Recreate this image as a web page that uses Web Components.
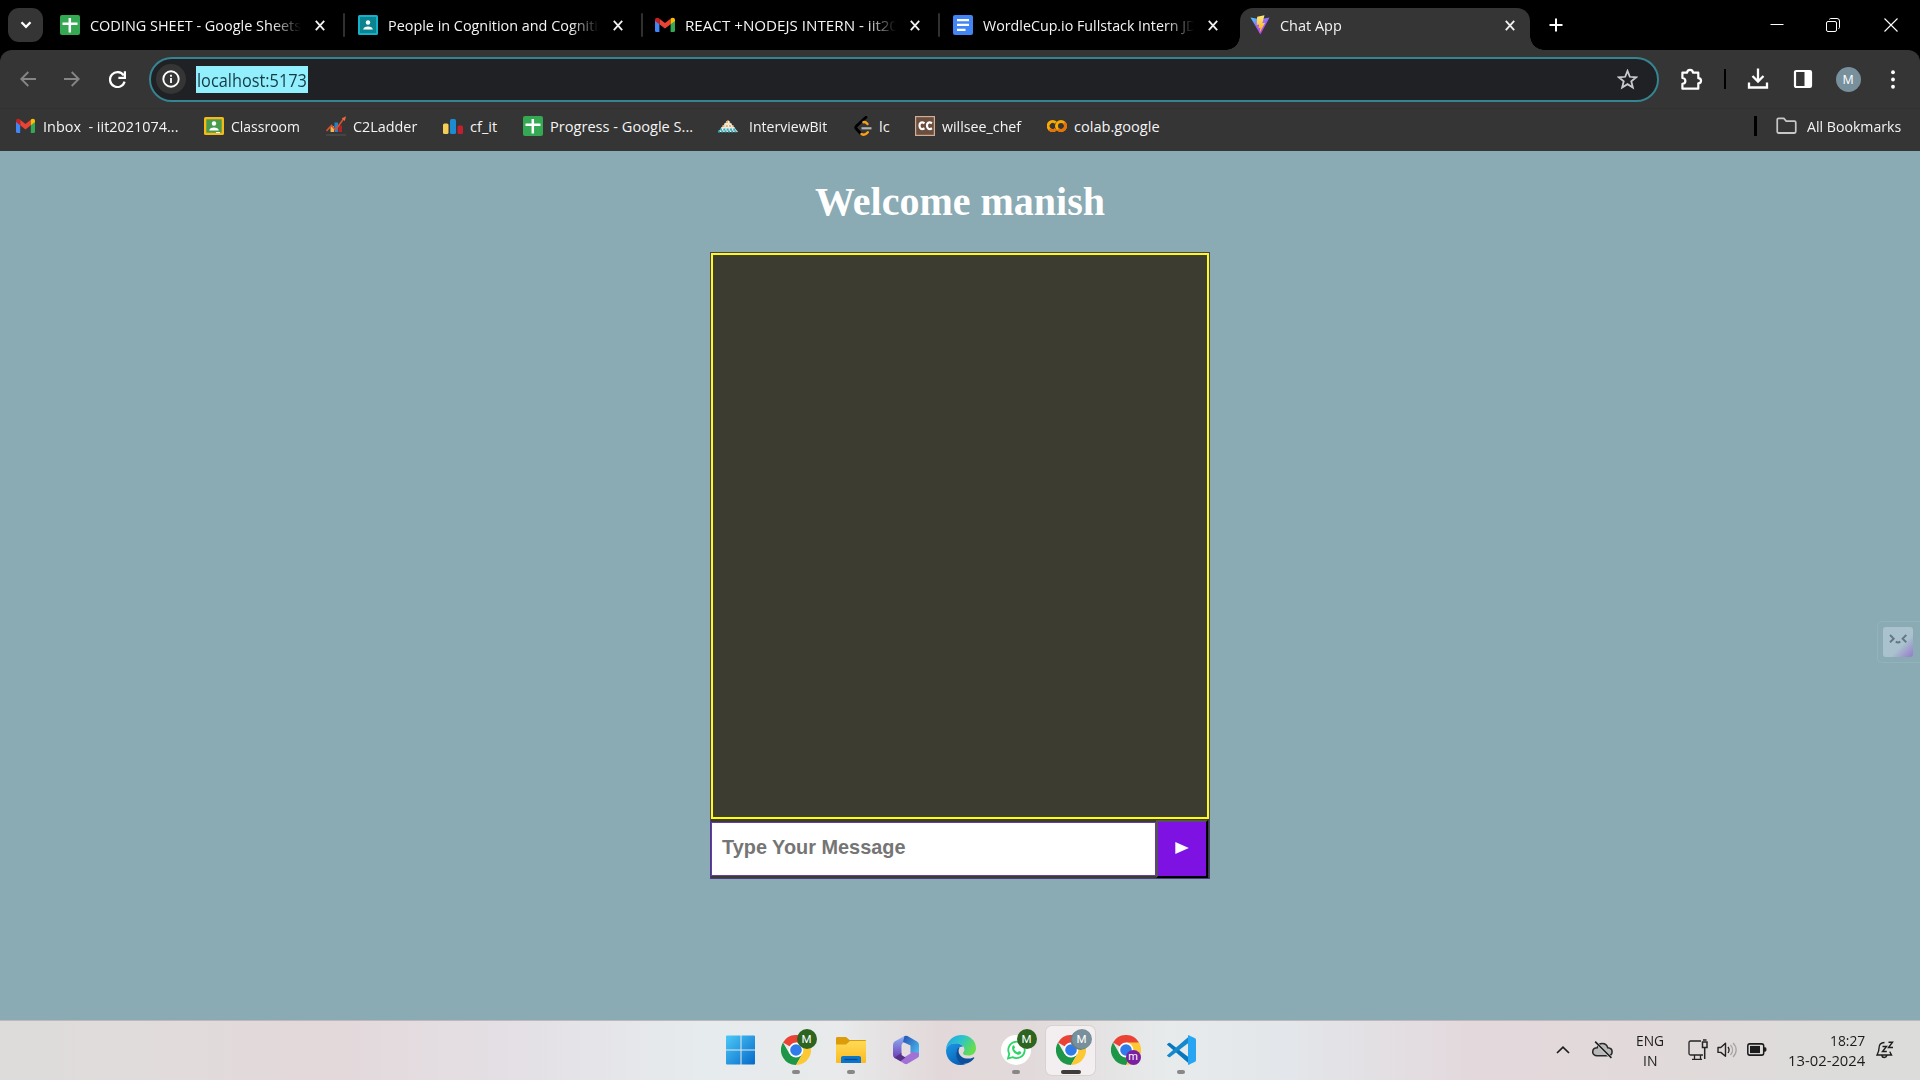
<!DOCTYPE html>
<html lang="en">
<head>
<meta charset="utf-8">
<title>Chat App</title>
<style>
html,body{margin:0;height:100%;overflow:hidden;background:#000}
body{font-family:"Open Sans","Noto Sans",sans-serif}
</style>
</head>
<body>
<desktop-screen></desktop-screen>
<script>
const chrome = `<path d="M15 15 2 7.500A15 15 0 0 1 28 7.500z" fill="#ea4335"/><path d="M2 7.500A15 15 0 0 0 15 30L21.500 18.700 8.500 18.700z" fill="#1e9648"/><path d="M28 7.500A15 15 0 0 1 15 30L21.500 18.700 15 7.500z" fill="#fcc934"/><circle cx="15" cy="15" r="7.400" fill="#fff"/><circle cx="15" cy="15" r="5.800" fill="#2f7bea"/>`;
const sheet = `<rect width="20" height="20" rx="2" fill="#34a853"/><path d="M9.800 3v14.500M2.500 8.800h15" stroke="#fff" stroke-width="2.500"/>`;
const gmail = `<path d="M0 5v10.500A1.500 1.500 0 0 0 1.500 17H4.400V8.500z" fill="#4285f4"/><path d="M20 5v10.500a1.500 1.500 0 0 1-1.500 1.500H15.600V8.500z" fill="#34a853"/><path d="M4.400 3.700 10 8l5.600-4.300v5.600L10 13.600 4.400 9.300z" fill="#ea4335"/><path d="M0 5c0-2.200 2.300-3 4-1.700l.4.400v5.600L0 6z" fill="#c5221f"/><path d="M20 5c0-2.200-2.300-3-4-1.700l-.4.400v5.600L20 6z" fill="#fbbc04"/>`;
const person = `<circle cx="10" cy="7.500" r="2.200" fill="#fff"/><path d="M5.200 14.500c0-4 9.600-4 9.600 0z" fill="#fff"/>`;
// name: [viewBox, markup]
const ICONS = {
  sheet:['0 0 20 20',sheet], gmail:['0 0 20 20',gmail],
  people:['0 0 20 20',`<rect width="20" height="20" rx="1.500" fill="#16b1c8"/><rect x="2" y="2" width="16" height="16" fill="#0b8492"/>${person}`],
  classroom:['0 0 20 20',`<rect y="1" width="20" height="18" rx="1.500" fill="#f5ba15"/><rect x="2.300" y="3.300" width="15.400" height="13.400" fill="#4a9a50"/>${person}<path d="M12 16h4v1h-4z" fill="#fff"/>`],
  docs:['0 0 20 20',`<rect width="20" height="20" rx="2" fill="#4285f4"/><path d="M4 5.200h12M4 9.900h12M4 14.900h8.500" stroke="#fff" stroke-width="2.200"/>`],
  vite:['0 0 20 20',`<defs><linearGradient id="a" x1="0" y1="0" x2=".6" y2="1"><stop stop-color="#41d1ff"/><stop offset=".5" stop-color="#9a66f8"/><stop offset="1" stop-color="#bd34fe"/></linearGradient><linearGradient id="b" x1="0" y1="0" x2="0" y2="1"><stop stop-color="#ffea83"/><stop offset="1" stop-color="#ffa800"/></linearGradient></defs><path d="M.5 2.600 10 4.200 19.500 2.600 10.400 19.500z" fill="url(#a)"/><path d="M14.500.2 7.200 1.700 6.700 10l2.500-.5-.8 3.700 2-.5-1 5.500 5.700-10.500-2.800.5z" fill="url(#b)"/>`],
  x:['0 0 10 10',`<path d="M.8.8 9.200 9.200M9.200.8.8 9.200" stroke="#f1f1f1" stroke-width="1.900"/>`],
  down:['0 0 12 8',`<path d="M1.500 1.300 6 5.800 10.500 1.300" fill="none" stroke="#fff" stroke-width="2.300"/>`],
  plus:['0 0 14 14',`<path d="M7 .5v13M.5 7h13" stroke="#fff" stroke-width="2"/>`],
  min:['0 0 14 14',`<path d="M.5 6.500h13" stroke="#fff"/>`],
  restore:['0 0 14 14',`<rect x=".5" y="3.500" width="10" height="10" rx="1.500" fill="none" stroke="#fff"/><path d="M3.500 1.500c0-.6.5-1 1-1H11A2.500 2.500 0 0 1 13.500 3v6.500c0 .6-.4 1-1 1" fill="none" stroke="#fff"/>`],
  close:['0 0 14 14',`<path d="M.5.5l13 13M13.500.5l-13 13" stroke="#fff" stroke-width="1.100"/>`],
  back:['0 0 16 16',`<path d="M16 8H1.500M8.300 1 1.300 8l7 7" fill="none" stroke="#858585" stroke-width="1.900"/>`],
  fwd:['0 0 16 16',`<path d="M0 8h14.500M7.700 1l7 7-7 7" fill="none" stroke="#858585" stroke-width="1.900"/>`],
  reload:['0 0 16 16',`<path d="M13.800 4.200A7 7 0 1 0 14.700 10M15 .3V6.500H8.800" fill="none" stroke="#fff" stroke-width="2.100"/>`],
  info:['0 0 18 18',`<circle cx="9" cy="9" r="7.700" fill="none" stroke="#fff" stroke-width="1.900"/><path d="M9 8v5M9 4.800v2" stroke="#fff" stroke-width="1.800"/>`],
  star:['0 0 20 20',`<path d="m10 1.800 2.200 5.600 6 .5-4.600 3.800 1.500 5.900L10 14.400 4.900 17.600l1.500-5.900L1.800 7.900l6-.5z" fill="none" stroke="#c9cacc" stroke-width="1.700"/>`],
  ext:['0 0 22 22',`<path d="M2.300 4.500h4.500c.2-3.700 5.400-3.700 5.600 0h5.100v5.200c3.500.2 3.500 4.800 0 5v5.100H2.300v-4.600c3.800-.5 3.800-5.100 0-5.600z" fill="none" stroke="#fff" stroke-width="2.100" stroke-linejoin="round"/>`],
  download:['0 0 22 22',`<path d="M11 .5v12.500M5.500 8 11 13.500 16.500 8M2 14.500V19.500h18v-5" fill="none" stroke="#fff" stroke-width="2.300"/>`],
  panel:['0 0 20 20',`<rect x="2" y="2" width="16" height="16" rx="1.200" fill="none" stroke="#fff" stroke-width="2.200"/><path d="M11.500 2H18v16h-6.500z" fill="#fff"/>`],
  dots:['0 0 6 20',`<g fill="#fff"><circle cx="3" cy="3" r="1.900"/><circle cx="3" cy="10" r="1.900"/><circle cx="3" cy="17" r="1.900"/></g>`],
  ladder:['0 0 20 20',`<path d="M4.500 10h3.500v6H4.500z" fill="#efb94f"/><path d="M8.500 6.500H12V16H8.500z" fill="#1d86c8"/><path d="M12.500 9.500H16V16h-3.500z" fill="#b5202a"/><path d="M.5 15 5.500 9.500 9.500 14 18 2.200" fill="none" stroke="#d9512d" stroke-width="1.600"/><path d="M20 .2 18.800 5 15.700 2.500z" fill="#f46b3b"/><path d="M0 19h20" stroke="#555"/>`],
  cf:['0 0 20 20',`<rect x="0" y="7.500" width="5.500" height="10.500" rx="1.500" fill="#f5ce56"/><rect x="7" y="3" width="6" height="15" rx="1.500" fill="#1c8bd0"/><rect x="14.500" y="9.500" width="5.500" height="8.500" rx="1.500" fill="#c1202c"/>`],
  ib:['0 0 20 20',`<path d="M10 4 20 16H0z" fill="#f4f1e5"/><g stroke-width="2" stroke-dasharray="2 1.300" fill="none"><path d="M8 6h4M4.500 10h11" stroke="#f2ae60"/><path d="M6.500 8h7M3 12.300h14" stroke="#d9e8e5"/><path d="M0 15.500h20M2 13.500h16" stroke="#33a9bd"/></g>`],
  lc:['0 0 18 20',`<path d="M12 1.300 2.500 10c-1 1-1 2 0 3l3.700 4" fill="none" stroke="#000" stroke-width="2.800" stroke-linecap="round"/><path d="M9.500 6.200c1.500-.7 2.500 0 4 1.800M7.500 18c2.500 1.500 4.500.5 6.300-1.800" fill="none" stroke="#f7a11b" stroke-width="2.400" stroke-linecap="round"/><path d="M7.500 12.300h10" stroke="#b3b3b3" stroke-width="2.200"/>`],
  cc:['0 0 20 20',`<rect width="20" height="20" fill="#d0ad95"/><rect x="1.200" y="1.200" width="17.600" height="17.600" fill="#6b4e3d"/><path d="M9.500 7.300C6.300 5.300 4.400 7 4.500 9.800S6.500 14 9.500 12.300M17 7.300c-3.200-2-5.100-.3-5 2.500s2 4.200 5 2.500" fill="none" stroke="#fff" stroke-width="2.200"/>`],
  colab:['0 0 20 20',`<path d="M8.700 6.700A4.500 4.500 0 1 0 8.700 13.300" fill="none" stroke="#f9ab00" stroke-width="3"/><circle cx="14" cy="10" r="4.500" fill="none" stroke="#f9ab00" stroke-width="3"/><path d="M10.800 13.200A4.500 4.500 0 0 0 17.200 6.800M2.300 13.200A4.500 4.500 0 0 0 8.700 13.300" fill="none" stroke="#e8710a" stroke-width="3"/>`],
  folder:['0 0 22 18',`<path d="M1.300 2.800c0-1 .6-1.500 1.400-1.500h5.500l2.500 2.900h8.600c.9 0 1.400.6 1.400 1.400v9c0 .8-.6 1.400-1.400 1.400H2.700c-.8 0-1.400-.6-1.400-1.400z" fill="none" stroke="#c7c7c7" stroke-width="1.800"/>`],
  win:['0 0 30 30',`<defs><linearGradient id="w" x1="0" y1="0" x2="1" y2="1" ><stop stop-color="#4cc9f7"/><stop offset="1" stop-color="#0669c9"/></linearGradient></defs><path d="M1 .5h13.500V14.500H0V1.500a1 1 0 0 1 1-1zM15.500.5H28a1 1 0 0 1 1 1v13H15.500zM0 15.500h14.500v14H1a1 1 0 0 1-1-1zM15.500 15.500H29v13a1 1 0 0 1-1 1H15.500z" fill="url(#w)"/>`],
  chrome:['0 0 30 30',chrome],
  files:['0 0 30 30',`<defs><linearGradient id="f" x1="0" y1="0" x2="0" y2="1"><stop stop-color="#ffda57"/><stop offset="1" stop-color="#fbba20"/></linearGradient></defs><path d="M0 3.500C0 2.500.6 2 1.500 2H10l3.500 3H29c.6 0 1 .4 1 1v5H0z" fill="#dc9b08"/><path d="M0 9.500h10L14 6h16v21a1 1 0 0 1-1 1H1a1 1 0 0 1-1-1z" fill="url(#f)"/><path d="M5 28v-5c0-1.200.8-2 2-2h16c1.200 0 2 .8 2 2v5z" fill="#0b76cc"/><path d="M8.500 24.500h13" stroke="#064b87" stroke-width="1.300"/>`],
  m365:['0 0 30 30',`<defs><linearGradient id="m" x1="0" y1="0" x2="0" y2="1"><stop stop-color="#8fb1f3"/><stop offset="1" stop-color="#6d3eb6"/></linearGradient><linearGradient id="n" x1="0" y1="0" x2="1" y2="1"><stop stop-color="#234fb3"/><stop offset="1" stop-color="#52cbf5"/></linearGradient></defs><path d="M13.500 1 4 6.200Q2 7.500 2 10v10q0 2 1.800 3.200L10.500 19.500V10.500q0-2 2-3.200l4-2.200z" fill="url(#m)"/><path d="M13.500 1q1.500-.7 3 .1L26 6.500Q28 7.700 28 10v10q0 1.500-1 2.700L19.500 17V10.500L12 7z" fill="url(#n)"/><path d="M3.300 22.500 13.500 28.800q1.500.7 3 0l9.700-5.700q1.800-1.200 1.800-3.400V18L19.500 16.500V18.500L13 22.500 10 20z" fill="#a271d5"/><path d="M3.300 22.800 10.500 18v2l4 2.500-5 3.800z" fill="#553189"/><path d="M12 11.200 15.200 9.500 18.500 11.200v6L15.200 19.500 12 17.500z" fill="#e4dcde"/>`],
  edge:['0 0 30 30',`<defs><linearGradient id="e" x1="0" y1="0" x2="1" y2=".45"><stop stop-color="#22a2e4"/><stop offset=".5" stop-color="#2ac3cf"/><stop offset="1" stop-color="#65dd50"/></linearGradient><linearGradient id="g" x1="0" y1="0" x2=".6" y2="1"><stop stop-color="#1b9ae5"/><stop offset="1" stop-color="#0960b7"/></linearGradient></defs><path d="M0 14.500C.5 6 7.500 0 15.500 0 24 0 30 6 30 13c0 5-3.500 7.500-7.500 7.500-3 0-5.500-1-5.500-2.300 0-.8 1.400-1.500 1.400-3.700C18.400 11 14.500 8.200 9.800 8.200 5 8.200 1 11 0 14.500z" fill="url(#e)"/><path d="M0 15.500C.5 11 4.500 8.200 9.800 8.200c3.500 0 6 1.300 7.400 3.200-3.700-.3-6.700 2.600-6.700 6.800 0 5.500 4 10.500 9.500 10.900C10 32.500 0 26 0 15.500z" fill="url(#g)"/><path d="M12.500 12.700c-3.500 3-3.800 11.500 3 16.200 6 .5 10-1.900 12.600-5.600.4-.7-.1-1.200-.8-.9-6.600 2.800-13.300.3-14.500-4.900-.4-1.800-.2-3.300.9-4.900z" fill="#0c4f9a"/>`],
  wa:['0 0 30 30',`<circle cx="15" cy="15" r="15" fill="#fff"/><path d="M7 23.500 8.300 18.800A8.200 8.200 0 1 1 11.600 22.100z" fill="none" stroke="#2cd566" stroke-width="1.800"/><path d="M11.400 11.200c.9-1.500 1.800-1 2.200.2l.5 1.200-1 1.300c1 1.700 2.100 2.600 3.700 3.300l1.200-1.300 2.300 1.100c0 2-1.700 3-3.400 2.700-3.500-.7-6.900-4.600-5.500-8.500z" fill="#2cd566"/>`],
  code:['0 0 30 30',`<path d="M.8 9.600 2.600 8q.7-.5 1.500 0L24 23.200V29.500z" fill="#0877bd"/><path d="M.8 20.400 2.600 22q.7.500 1.500 0L24 6.800V.5z" fill="#1489ce"/><path d="M22 0l6.700 3q1.300.6 1.300 2v20q0 1.400-1.300 2L22 30z" fill="#27a5f2"/>`],
  up:['0 0 14 8',`<path d="M1 7 7 1.200 13 7" fill="none" stroke="#1d1d1d" stroke-width="1.700"/>`],
  cloud:['0 0 20 20',`<path d="M5 16C-1 16-.5 8.300 5 8.300c1-5.300 8.500-5.500 10 0 5.500.2 5.500 7.700 0 7.700z" fill="#b9b9ba" stroke="#292929" stroke-width="1.500"/><path d="M3 2.500 18 17.800" stroke="#dedada" stroke-width="2.600"/><path d="M3 2.500 18.500 18" stroke="#1d1d1d" stroke-width="1.500"/>`],
  net:['0 0 20 22',`<path d="M13 2H2.500A1.500 1.500 0 0 0 1 3.500v11A1.500 1.500 0 0 0 2.500 16h12.500M6.500 16v4M12.500 16v4M4 20.300h10" fill="none" stroke="#242424" stroke-width="1.300"/><path d="M14.500 3h4.500v5.500h-4.500zM15 1h3.500M16.700 8.500V20" fill="none" stroke="#242424" stroke-width="1.500"/>`],
  vol:['0 0 20 20',`<path d="M1 7.500h2.800L8.500 3.300v13L3.800 12.400H1z" fill="none" stroke="#222" stroke-width="1.400" stroke-linejoin="round"/><path d="M11 7c1.400 1.900 1.400 4 0 6" fill="none" stroke="#222" stroke-width="1.300"/><path d="M13.500 5c2.700 3 2.700 7 0 10M16 3c4.200 4 4.200 10 0 14" fill="none" stroke="#a5a3a4" stroke-width="1.300"/>`],
  bat:['0 0 20 12',`<rect x=".8" y=".8" width="15.900" height="10.400" rx="2" fill="none" stroke="#1c1c1c" stroke-width="1.500"/><rect x="3" y="2.700" width="10" height="6.600" fill="#1c1c1c"/><path d="M17 4h1.200q1.300 0 1.300 2T18.200 8H17z" fill="#1c1c1c"/>`],
  bell:['0 0 18 20',`<path d="M8.500 2.500C4 2.500 3 5.500 3 8.300 3 11.500 2 13 1 15h14.500c-.5-1-1.300-2-1.600-3.300M5.800 15.500c.5 2.600 4.400 2.600 5 0M6.500 6.500h4L6.500 11.500h4.300M12.500 2.300h4L12.500 7.500H17" fill="none" stroke="#1d1d1d" stroke-width="1.400"/>`],
  ai:['0 0 30 30',`<defs><linearGradient id="q" x1="0" y1="0" x2="1" y2="1"><stop offset=".62" stop-color="#a9c2ce"/><stop offset="1" stop-color="#9579cb"/></linearGradient></defs><rect width="30" height="30" rx="3" fill="url(#q)"/><path d="M7 8l3.700 3.700L7 15.200M23.300 8l-3.700 3.700 3.700 3.500M12.800 14.500q2.200 2 4.500 0" fill="none" stroke="#637783" stroke-width="1.900"/>`],
  play:['0 0 14 12',`<path d="M.3 0 13.800 6 .3 12z" fill="#fff"/>`]
};

class Base extends HTMLElement {
  constructor(){ super(); this.attachShadow({mode:'open'}); }
  attr(n,d=''){ return this.getAttribute(n) ?? d; }
  connectedCallback(){ this.shadowRoot.innerHTML = `<style>*{box-sizing:border-box}${this.css()}</style>${this.html()}`; this.ready && this.ready(); }
}
customElements.define('ui-icon', class extends Base {
  css(){ return `:host{display:block;flex:none;width:${this.attr('w',20)}px;height:${this.attr('h',this.attr('w',20))}px;margin-left:${this.attr('ml',0)}px}svg{display:block;width:100%;height:100%}`; }
  html(){ const [v,m]=ICONS[this.attr('name')]; return `<svg viewBox="${v}" preserveAspectRatio="none">${m}</svg>`; }
});
// Single line label whose glyph run is condensed to the width in "w"
customElements.define('fit-text', class extends Base {
  css(){ return `:host{display:block;flex:none;width:${this.attr('w')}px;margin-left:${this.attr('ml',0)}px;white-space:pre;line-height:20px}span{display:inline-block;transform-origin:0 50%}`; }
  html(){ return `<span>${this.attr('text')}</span>`; }
  ready(){ const s=this.shadowRoot.querySelector('span'); s.style.transform=`scaleX(${this.attr('w')/s.offsetWidth})`; }
});
customElements.define('browser-tab', class extends Base {
  css(){ return `:host{display:flex;align-items:center;height:34px;width:${this.attr('width',297.5)}px;flex:none;color:#f4f4f4;font-size:14.6px;position:relative}
    .t{width:216px;margin:0 -6px 0 10px;flex:none}
    .fade{-webkit-mask-image:linear-gradient(90deg,#000 182px,transparent 211px)}
    .s{width:2px;height:24px;background:#303030;border-radius:1px;margin-left:18px}
    :host([active]){width:290px;height:42px;background:#353535;border-radius:13px 13px 0 0;padding:0 0 8px 10px;margin-left:-1px}
    :host([active])::before,:host([active])::after{content:"";position:absolute;bottom:0;width:14px;height:14px}
    :host([active])::before{left:-14px;background:radial-gradient(circle at 0 0,transparent 13.500px,#353535 14px)}
    :host([active])::after{right:-14px;background:radial-gradient(circle at 100% 0,transparent 13.500px,#353535 14px)}`; }
  html(){ const a=this.hasAttribute('active');
    return `<ui-icon name="${this.attr('icon')}"></ui-icon><div class="t ${a?'':'fade'}"><fit-text w="${this.attr('tw')}" text="${this.attr('text')}"></fit-text></div><ui-icon name="x" w="10" h="11" ml="15"></ui-icon>${a||this.hasAttribute('last')?'':'<div class="s"></div>'}`; }
});
customElements.define('tab-strip', class extends Base {
  css(){ return `:host{display:flex;height:50px;background:#000;padding-top:8px;align-items:flex-start;padding-left:8px}
    .b{width:35px;height:34px;border-radius:11px;background:#353535;display:flex;align-items:center;justify-content:center;margin-right:17px;flex:none}
    .w{display:flex;align-items:center;height:34px;flex:none;margin-left:18.500px}`; }
  html(){ return `<div class="b"><ui-icon name="down" w="12" h="8"></ui-icon></div>
    <browser-tab icon="sheet" text="CODING SHEET - Google Sheets" tw="211"></browser-tab>
    <browser-tab icon="people" text="People in Cognition and Cogniti" tw="210"></browser-tab>
    <browser-tab icon="gmail" text="REACT +NODEJS INTERN - iit20" tw="213"></browser-tab>
    <browser-tab last width="288.500" icon="docs" text="WordleCup.io Fullstack Intern JD" tw="213"></browser-tab>
    <browser-tab active icon="vite" text="Chat App" tw="61.500"></browser-tab>
    <div class="w"><ui-icon name="plus" w="14"></ui-icon><ui-icon name="min" w="14" ml="207.500"></ui-icon><ui-icon name="restore" w="14" ml="42"></ui-icon><ui-icon name="close" w="14" ml="43.500"></ui-icon></div>`; }
});
customElements.define('address-bar', class extends Base {
  css(){ return `:host{display:flex;height:58px;background:#353535;align-items:center;padding-left:19.500px;border-radius:12px 12px 0 0}
    .o{width:1510px;height:45px;border:2.500px solid #358491;border-radius:23px;background:#202124;display:flex;align-items:center;margin-left:23.500px;padding-left:5px;flex:none}
    .i{width:30px;height:30px;border-radius:50%;background:#353535;display:flex;align-items:center;justify-content:center}
    .sel{margin-left:9.500px;width:112px;height:27px;background:#92effe;color:#173a43;font-size:17.500px;padding:4px 0 0 1px}
    .v{width:2px;height:20px;background:#000;margin-left:20.500px}
    .a{flex:none;width:25px;height:25px;border-radius:50%;background:#78909c;color:#fff;font-size:12.500px;text-align:center;line-height:25px;margin-left:23px}`; }
  html(){ return `<ui-icon name="back" w="16"></ui-icon><ui-icon name="fwd" w="16" ml="28.500"></ui-icon><ui-icon name="reload" w="17" ml="28.500"></ui-icon>
    <div class="o"><div class="i"><ui-icon name="info" w="18"></ui-icon></div><div class="sel"><fit-text w="110" text="localhost:5173"></fit-text></div><ui-icon name="star" w="21" ml="1309"></ui-icon></div>
    <ui-icon name="ext" w="23" ml="21"></ui-icon><div class="v"></div><ui-icon name="download" w="22" ml="21.500"></ui-icon><ui-icon name="panel" w="20" ml="23.500"></ui-icon><div class="a">M</div><ui-icon name="dots" w="6" h="21" ml="29.500"></ui-icon>`; }
});
customElements.define('bookmark-bar', class extends Base {
  css(){ return `:host{display:flex;height:43px;background:#353535;border-top:1px solid #313131;align-items:center;padding:0 0 8px 15.500px;color:#f4f4f4;font-size:14.600px}.v{width:2.500px;height:20px;background:#000;margin-left:594px}`; }
  html(){
    // icon, icon width, gap before icon, label, gap before label, label width
    const m=[['gmail',19,0,'Inbox  - iit2021074...',8,135.5],['classroom',20,26,'Classroom',7,69],['ladder',20,26,'C2Ladder',7,64],['cf',20,26,'cf_it',7,27],['sheet',20,26,'Progress - Google S...',7,143],['ib',20,25,'InterviewBit',10.5,78],['lc',18,27,'lc',7.5,11],['cc',20,25,'willsee_chef',7,79],['colab',20,26,'colab.google',7,86]];
    return m.map(b=>`<ui-icon name="${b[0]}" w="${b[1]}" h="20" ml="${b[2]}"></ui-icon><fit-text ml="${b[4]}" w="${b[5]}" text="${b[3]}"></fit-text>`).join('')+`<div class="v"></div><ui-icon name="folder" w="21" h="18" ml="19.500"></ui-icon><fit-text ml="10" w="94" text="All Bookmarks"></fit-text>`; }
});
customElements.define('chat-page', class extends Base {
  css(){ return `:host{display:flex;flex-direction:column;align-items:center;height:869px;background:#8aaab4;position:relative}
    h1{margin:27px 0 0;font:bold 40px/48px "Liberation Serif",serif;color:#fff;height:74px;width:290px;text-align:center;white-space:nowrap}
    .card{width:500px;height:627px;border:1px solid #4b3b84;background:#3d3c31}
    .log{height:566px;border:2px solid #ff0}
    .row{display:flex;height:59px;padding-top:1px}
    .in{width:445px;height:54px;margin-top:2px;border:1px solid #663da0;background:#fff;font:bold 19.900px/48px "Liberation Sans",sans-serif;color:#757575;padding:0 0 0 10px}
    .btn{width:52px;height:58px;background:#7d12e3;border:2px solid #000;border-top-color:#545454;border-left-color:#545454;padding:20px 0 0 17px}
    .ai{position:absolute;right:0;top:470px;width:43px;height:42px;border:1.500px solid #95b1bd;border-right:0;border-radius:5px 0 0 5px;padding:5px 0 0 5px}`; }
  html(){ return `<h1>Welcome manish</h1><div class="card"><div class="log"></div><div class="row"><div class="in">Type Your Message</div><div class="btn"><ui-icon name="play" w="14" h="12"></ui-icon></div></div></div><div class="ai"><ui-icon name="ai" w="30"></ui-icon></div>`; }
});
customElements.define('task-item', class extends Base {
  css(){ return `:host{display:flex;flex:none;width:49px;height:49px;margin-right:6px;border-radius:6px;position:relative;justify-content:center;padding-top:9px}
    :host([active]){background:#f3eff0;box-shadow:0 0 0 1px #d9d2d3}
    .d{position:absolute;bottom:1px;left:20.500px;width:8px;height:4px;border-radius:2px;background:#898687}
    :host([active]) .d{width:20px;left:14.500px;background:#3e3c3d}
    .g{position:absolute;left:25.500px;top:3px;width:20px;height:20px;border-radius:50%;background:${this.attr('color')};color:#fff;font:11.500px/20px Roboto,sans-serif;text-align:center}
    .g.s{left:24.500px;top:24px;width:15px;height:15px;line-height:14px;font-size:11px}
    .g.k{box-shadow:-1.500px 1px 0 #657b87}`; }
  html(){ const b=this.attr('badge'); return `<ui-icon name="${this.attr('icon')}" w="${this.attr('w',30)}"></ui-icon>${this.hasAttribute('run')?'<div class="d"></div>':''}${b?`<div class="g ${b==='m'?'s':''} ${this.hasAttribute('active')?'k':''}">${b}</div>`:''}`; }
});
customElements.define('task-bar', class extends Base {
  css(){ return `:host{display:flex;height:60px;border-top:1px solid #bdb8ba;padding-left:716px;color:#1c1c1c;font-size:15px;
     background:linear-gradient(90deg,#dddcda 0,#e0dcdb 130px,#e3d8da 320px,#e4e0e5 520px,#e6ebed 700px,#e8eaeb 840px,#e2d8d9 940px,#e2dada 1030px,#e7ebec 1170px,#e3e6ea 1290px,#e3d8dc 1480px,#e2dada 1640px,#dcdcda 1840px,#dcdcdb 1920px)}
    .apps{display:flex;padding-top:5px;width:839.500px;flex:none}
    .tray{display:flex;align-items:center;height:57px}
    .c{display:flex;flex-direction:column;align-items:center;flex:none}
    .c.r{align-items:flex-end}`; }
  html(){ return `<div class="apps">
    <task-item icon="win"></task-item><task-item icon="chrome" run badge="M" color="#2d6420"></task-item><task-item icon="files" run></task-item><task-item icon="m365"></task-item><task-item icon="edge"></task-item><task-item icon="wa" run badge="M" color="#2d6420"></task-item><task-item icon="chrome" active run badge="M" color="#78909c"></task-item><task-item icon="chrome" badge="m" color="#7b1fa2"></task-item><task-item icon="code" run></task-item></div>
    <div class="tray"><ui-icon name="up" w="14" h="8"></ui-icon><ui-icon name="cloud" w="21" ml="22.500"></ui-icon>
    <div class="c" style="margin-left:23px"><fit-text w="28.500" text="ENG"></fit-text><fit-text w="14" text="IN"></fit-text></div>
    <ui-icon name="net" w="20" h="22" ml="23"></ui-icon><ui-icon name="vol" w="20" ml="9.500"></ui-icon><ui-icon name="bat" w="20" h="13" ml="10"></ui-icon>
    <div class="c r" style="margin-left:20.500px"><fit-text w="35" text="18:27"></fit-text><fit-text w="77" text="13-02-2024"></fit-text></div>
    <ui-icon name="bell" w="18" h="20" ml="11"></ui-icon></div>`; }
});
customElements.define('desktop-screen', class extends Base {
  css(){ return `:host{display:flex;flex-direction:column;width:1920px;height:1080px;overflow:hidden}`; }
  html(){ return `<tab-strip></tab-strip><address-bar></address-bar><bookmark-bar></bookmark-bar><chat-page></chat-page><task-bar></task-bar>`; }
});
</script>
</body>
</html>
